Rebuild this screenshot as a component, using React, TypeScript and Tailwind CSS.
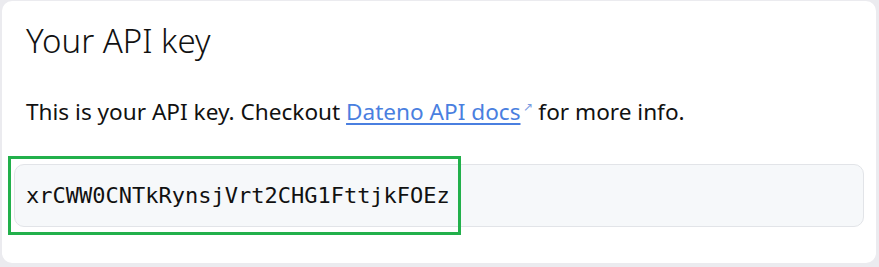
import React from 'react';

const API_KEY = 'xrCWW0CNTkRynsjVrt2CHG1FttjkFOEz';

export default function App() {
  return (
    <div className="h-[267px] w-[879px] bg-[#ebebef] pt-px pl-[2px] pr-[3px] pb-[4px] font-['Noto_Sans','Open_Sans',sans-serif]">
      <div className="h-full rounded-[10px] bg-white px-[24px] pt-[20px]">
        {/* Title */}
        <h2 className="text-[33px] font-light leading-[40px] text-[#111]">Your API key</h2>

        {/* Description */}
        <p className="mt-[32px] text-[22.6px] leading-[28px] text-[#111]">
          This is your API key. Checkout{' '}
          <a href="#" className="text-[#4a7fe0] underline underline-offset-[3px]">
            Dateno API docs
          </a>
          <span className="ml-[2px] align-super text-[12px] text-[#7a9be0]">↗</span> for more info.
        </p>

        {/* Key */}
        <div className="relative mt-[38px] -mx-[12px]">
          <div className="h-[63px] rounded-[10px] border border-[#e2e4e8] bg-[#f6f8fa] px-[11px] pt-[18px]">
            <code className="block font-['DejaVu_Sans_Mono','Liberation_Mono',monospace] text-[22px] leading-[26px] text-[#111]">{API_KEY}</code>
          </div>
          <div className="pointer-events-none absolute -top-[8px] -left-[6px] h-[79px] w-[453px] border-[3px] border-[#22b04b]" />
        </div>
      </div>
    </div>
  );
}
